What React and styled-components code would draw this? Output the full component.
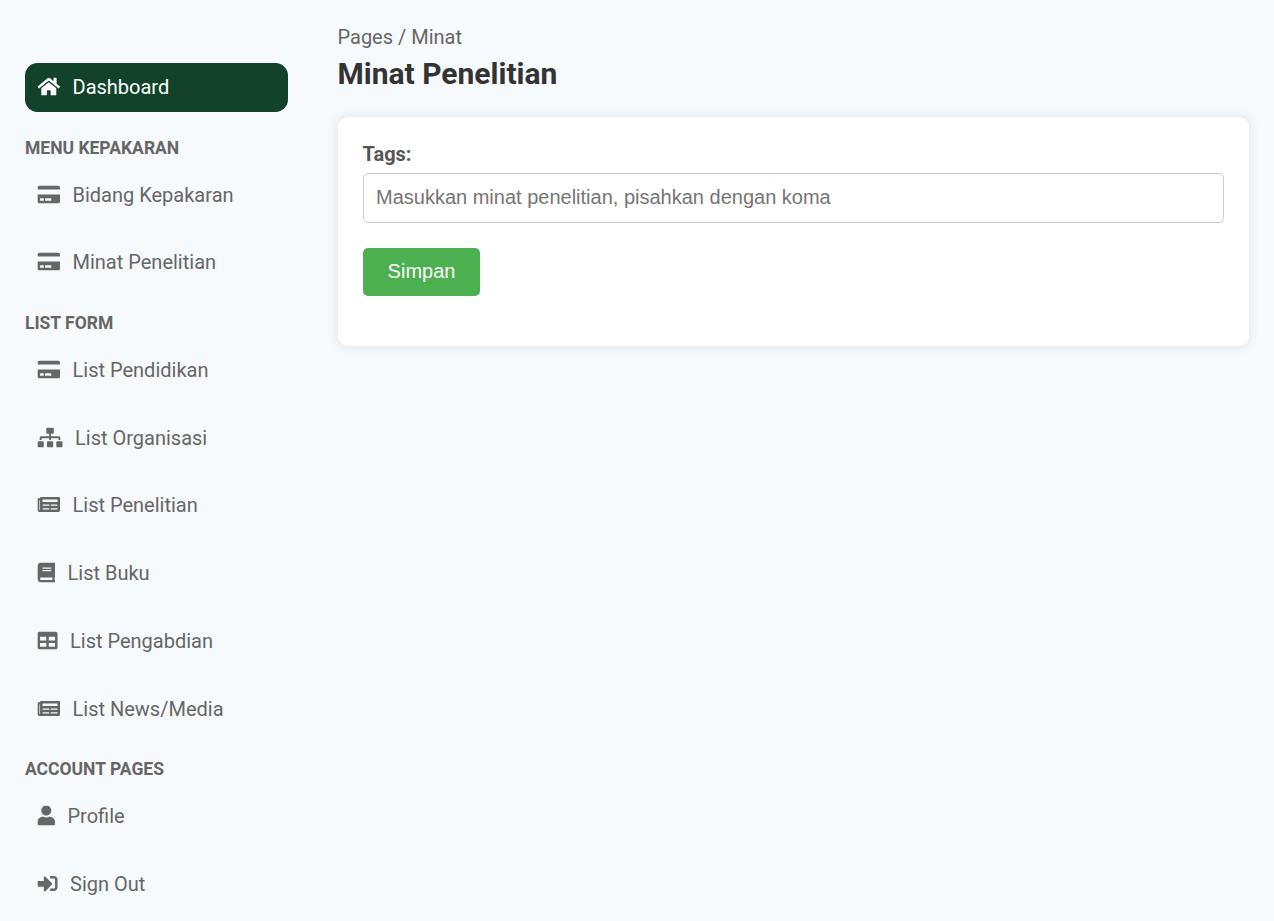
import React from "react";
import styled, { createGlobalStyle } from "styled-components";
import { FaHome, FaCreditCard, FaSitemap, FaNewspaper, FaBook, FaTable, FaUser, FaSignInAlt } from "react-icons/fa";

const Global = createGlobalStyle`
  * { box-sizing: border-box; }
  body { margin: 0; background: #f7fafd; color: #666; font-family: Roboto, sans-serif; font-size: 20px; }
`;

const Shell = styled.div`
  display: flex;
  height: 921px;
  overflow: hidden;
`;

const Sidebar = styled.nav`
  width: 312.5px;
  flex: none;
  padding: 63px 25px 0;
`;

const Heading = styled.h2`
  margin: 0;
  padding: 25px 0 0;
  height: ${(p) => p.$height}px;
  font-size: 17.5px;
  line-height: 22px;
  font-weight: 700;
`;

const Item = styled.a`
  display: flex;
  align-items: center;
  height: 48.5px;
  margin-bottom: ${(p) => (p.$last ? 0 : 19.25)}px;
  padding: 0 12px;
  gap: 12.5px;
  border-radius: 12.5px;
  background: ${(p) => (p.$active ? "#12432a" : "transparent")};
  color: ${(p) => (p.$active ? "#fff" : "#666")};
  svg {
    width: ${(p) => p.$icon}px;
    height: 20px;
    flex: none;
    transform: translate(0.3px, -0.4px);
  }
`;

const Main = styled.main`
  flex: 1;
  padding: 25px 25px 0;
`;

const Crumb = styled.div`
  line-height: 24px;
`;

const Title = styled.h1`
  margin: 6px 0 25px;
  font-size: 30px;
  line-height: 37px;
  font-weight: 700;
  color: #333;
`;

const Card = styled.section`
  height: 229px;
  padding: 25px;
  background: #fff;
  border-radius: 10px;
  box-shadow: 0 0 12px rgba(0, 0, 0, 0.1);
`;

const Label = styled.label`
  display: block;
  line-height: 24px;
  margin-bottom: 7px;
  font-weight: 700;
  color: #555;
`;

const Input = styled.input`
  display: block;
  width: 100%;
  height: 50px;
  padding: 0 12px 2px 12.5px;
  border: 1px solid #ccc;
  border-radius: 5px;
  font: 20px "Liberation Sans", Arial, sans-serif;
  &::placeholder { color: #757575; }
`;

const Button = styled.button`
  margin-top: 25px;
  width: 117px;
  height: 48px;
  padding: 0 0 2px 1px;
  border: 0;
  border-radius: 5px;
  background: #4caf50;
  color: #fff;
  font: 20px "Liberation Sans", Arial, sans-serif;
`;

const groups = [
  { items: [["Dashboard", FaHome, 23, true]] },
  {
    title: "MENU KEPAKARAN",
    height: 58.75,
    items: [["Bidang Kepakaran", FaCreditCard, 23], ["Minat Penelitian", FaCreditCard, 23]],
  },
  {
    title: "LIST FORM",
    height: 59,
    items: [
      ["List Pendidikan", FaCreditCard, 23],
      ["List Organisasi", FaSitemap, 25.5],
      ["List Penelitian", FaNewspaper, 23],
      ["List Buku", FaBook, 18],
      ["List Pengabdian", FaTable, 20.5],
      ["List News/Media", FaNewspaper, 23],
    ],
  },
  { title: "ACCOUNT PAGES", height: 59, items: [["Profile", FaUser, 18], ["Sign Out", FaSignInAlt, 20.5]] },
];

export default function App() {
  return (
    <Shell>
      <Global />
      <Sidebar>
        {groups.map((group, g) => (
          <React.Fragment key={g}>
            {group.title && <Heading $height={group.height}>{group.title}</Heading>}
            {group.items.map(([name, Icon, size, active], i) => (
              <Item key={name} $icon={size} $active={active} $last={i === group.items.length - 1}>
                <Icon />
                {name}
              </Item>
            ))}
          </React.Fragment>
        ))}
      </Sidebar>
      <Main>
        <Crumb>Pages / Minat</Crumb>
        <Title>Minat Penelitian</Title>
        <Card>
          <Label htmlFor="tags">Tags:</Label>
          <Input id="tags" placeholder="Masukkan minat penelitian, pisahkan dengan koma" />
          <Button>Simpan</Button>
        </Card>
      </Main>
    </Shell>
  );
}
